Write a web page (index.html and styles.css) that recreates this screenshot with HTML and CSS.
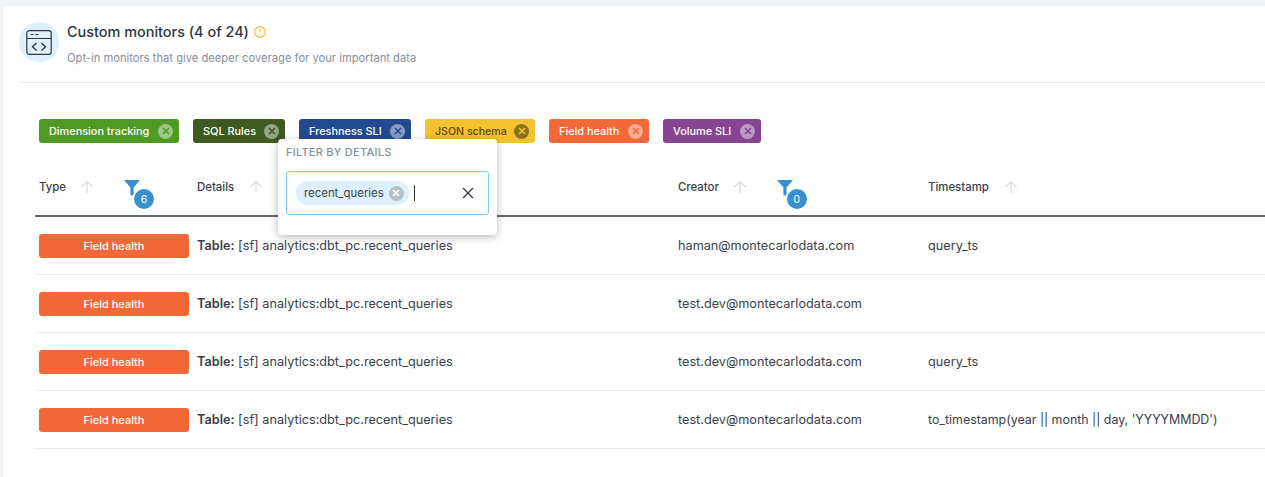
FILE: index.html
```html
<!DOCTYPE html>
<html lang="en">
<head>
<meta charset="utf-8">
<title>Custom monitors</title>
<link rel="stylesheet" href="styles.css">
</head>
<body>
<main class="card">
  <header class="head">
    <span class="head-icon">
      <svg width="26" height="26" viewBox="0 0 26 26" fill="none" stroke="#2f3642" stroke-width="1.2"><rect x="0.8" y="1.6" width="24.4" height="23.8" rx="2.4"/><path d="M1 9.5h24M4.5 5.5h3M9.5 5.5h3"/><path d="M10.5 14l-4 3.7 4 3.7M15.5 14l4 3.7-4 3.7" stroke-width="1.4"/></svg>
    </span>
    <div class="head-text">
      <h1 class="title">Custom monitors (4 of 24)
        <svg class="warn" width="12" height="12" viewBox="0 0 12 12" fill="none" stroke="#f4c22f" stroke-width="1.2"><circle cx="6" cy="6" r="5.3"/><path d="M6 2.8v3.8M6 8.2v1.1"/></svg>
      </h1>
      <p class="sub">Opt-in monitors that give deeper coverage for your important data</p>
    </div>
  </header>

  <div class="chips">
    <span class="chip green">Dimension tracking<i class="x"><svg viewBox="0 0 8 8"><path d="M1 1l6 6M7 1l-6 6"/></svg></i></span>
    <span class="chip moss">SQL Rules<i class="x"><svg viewBox="0 0 8 8"><path d="M1 1l6 6M7 1l-6 6"/></svg></i></span>
    <span class="chip navy">Freshness SLI<i class="x"><svg viewBox="0 0 8 8"><path d="M1 1l6 6M7 1l-6 6"/></svg></i></span>
    <span class="chip yellow">JSON schema<i class="x"><svg viewBox="0 0 8 8"><path d="M1 1l6 6M7 1l-6 6"/></svg></i></span>
    <span class="chip orange">Field health<i class="x"><svg viewBox="0 0 8 8"><path d="M1 1l6 6M7 1l-6 6"/></svg></i></span>
    <span class="chip purple">Volume SLI<i class="x"><svg viewBox="0 0 8 8"><path d="M1 1l6 6M7 1l-6 6"/></svg></i></span>
  </div>

  <div class="table">
    <div class="row header">
      <div class="c-type"><span class="th">Type</span><svg class="sort" width="14" height="14" viewBox="0 0 14 14"><path d="M7 13V1.500M1.500 7L7 1.500 12.500 7"/></svg>
        <span class="filter"><svg width="16" height="16" viewBox="0 0 16 16"><path d="M0 0h16L9.600 7.500V14a1.600 1.600 0 0 1-3.200 0V7.500z"/></svg><b class="count">6</b></span></div>
      <div class="c-details"><span class="th">Details</span><svg class="sort" width="14" height="14" viewBox="0 0 14 14"><path d="M7 13V1.500M1.500 7L7 1.500 12.500 7"/></svg></div>
      <div class="c-creator"><span class="th">Creator</span><svg class="sort" width="14" height="14" viewBox="0 0 14 14"><path d="M7 13V1.500M1.500 7L7 1.500 12.500 7"/></svg>
        <span class="filter"><svg width="16" height="16" viewBox="0 0 16 16"><path d="M0 0h16L9.600 7.500V14a1.600 1.600 0 0 1-3.200 0V7.500z"/></svg><b class="count">0</b></span></div>
      <div class="c-time"><span class="th">Timestamp</span><svg class="sort" width="14" height="14" viewBox="0 0 14 14"><path d="M7 13V1.500M1.500 7L7 1.500 12.500 7"/></svg></div>
    </div>
    <div class="row">
      <div class="c-type"><span class="badge">Field health</span></div>
      <div class="c-details"><b>Table:</b> [sf] analytics:dbt_pc.recent_queries</div>
      <div class="c-creator">haman@montecarlodata.com</div>
      <div class="c-time">query_ts</div>
    </div>
    <div class="row">
      <div class="c-type"><span class="badge">Field health</span></div>
      <div class="c-details"><b>Table:</b> [sf] analytics:dbt_pc.recent_queries</div>
      <div class="c-creator">test.dev@montecarlodata.com</div>
      <div class="c-time"></div>
    </div>
    <div class="row">
      <div class="c-type"><span class="badge">Field health</span></div>
      <div class="c-details"><b>Table:</b> [sf] analytics:dbt_pc.recent_queries</div>
      <div class="c-creator">test.dev@montecarlodata.com</div>
      <div class="c-time">query_ts</div>
    </div>
    <div class="row">
      <div class="c-type"><span class="badge">Field health</span></div>
      <div class="c-details"><b>Table:</b> [sf] analytics:dbt_pc.recent_queries</div>
      <div class="c-creator">test.dev@montecarlodata.com</div>
      <div class="c-time"><span class="expr">to_timestamp(year || month || day, 'YYYYMMDD')</span></div>
    </div>
  </div>

  <div class="popover">
    <div class="pop-label">FILTER BY DETAILS</div>
    <div class="pop-input">
      <span class="tag">recent_queries<i class="x tag-x"><svg viewBox="0 0 8 8"><path d="M1 1l6 6M7 1l-6 6"/></svg></i></span>
      <span class="caret"></span>
      <svg class="clear" width="12" height="12" viewBox="0 0 12 12"><path d="M1 1l10 10M11 1L1 11"/></svg>
    </div>
  </div>
</main>
</body>
</html>
```
FILE: styles.css
```css
* { box-sizing: border-box; }
html, body { margin: 0; height: 100%; }
body {
  background: #f2f6f9;
  font-family: "Inter", "Liberation Sans", sans-serif;
  font-feature-settings: "calt" 0, "liga" 0;
  color: #3a404c;
  overflow: hidden;
  padding: 6px 0 0 3px;
}
.card {
  position: relative;
  background: #fff;
  border-radius: 4px 0 0 0;
  height: 471px;
  padding: 16px 0 0 16px;
  box-shadow: 0 0 2px #dfe4ea;
}
.head {
  display: flex;
  gap: 8px;
  height: 61px;
  border-bottom: 1px solid #e6e9ef;
}
.head-icon {
  width: 40px;
  height: 40px;
  border-radius: 50%;
  background: #dff0fd;
  display: flex;
  align-items: center;
  justify-content: center;
}
.title {
  margin: 0;
  font-size: 14.45px;
  line-height: 20px;
  font-weight: 500;
  color: #2f3642;
  display: flex;
  align-items: center;
  gap: 5px;
}
.warn { display: block; }
.sub {
  margin: 8px 0 0;
  font-size: 11.2px;
  line-height: 16px;
  color: #868e9c;
}
.chips {
  display: flex;
  gap: 14px;
  padding: 36px 0 0 20px;
}
.chip {
  display: inline-flex;
  align-items: center;
  justify-content: space-between;
  height: 24px;
  padding: 0 6px 0 10px;
  border-radius: 3px;
  font-size: 10.9px;
  font-weight: 500;
  color: #fff;
  white-space: nowrap;
}
.x {
  flex: none;
  width: 15px;
  height: 15px;
  border-radius: 50%;
  display: flex;
  align-items: center;
  justify-content: center;
  background: rgba(255,255,255,.45);
}
.x svg { width: 8px; height: 8px; fill: none; stroke: currentColor; stroke-width: 1.6; }
.green { background: #4f9a24; width: 140px; }
.moss { background: #3d5a21; width: 92px; }
.navy { background: #234a90; width: 112px; }
.yellow { background: #f4c22f; color: #5a4a12; width: 110px; font-size: 10.6px; }
.yellow .x { background: rgba(70,60,10,.6); color: #f4c22f; }
.moss .x { color: #3d5a21; }
.green .x { color: #4f9a24; }
.navy .x { color: #234a90; }
.orange { background: #f26836; width: 100px; }
.orange .x { color: #f26836; }
.purple { background: #864493; width: 98px; }
.purple .x { color: #864493; }
.table { margin: 0 0 0 16px; padding-top: 30px; }
.row {
  display: grid;
  grid-template-columns: 158px 481px 250px 1fr;
  align-items: center;
  height: 58px;
  border-bottom: 1px solid #e8ebef;
  font-size: 12.7px;
}
.row > div { padding-left: 4px; }
.row.header {
  height: 44px;
  border-bottom: 2px solid #646a73;
  align-items: start;
  padding-top: 3px;
}
.row.header > div { display: flex; align-items: center; height: 22px; }
.th { font-size: 11.4px; font-weight: 500; color: #3a404c; }
.sort { margin-left: 14px; fill: none; stroke: #d5dde5; stroke-width: 1.2; }
.c-details .sort { margin-left: 15px; }
.c-time .sort { margin-left: 15px; }
.filter {
  position: relative;
  align-self: flex-start;
  margin: 4px 0 0 30px;
  width: 30px;
  height: 30px;
}
.filter svg { display: block; fill: #3a8fd0; }
.count {
  position: absolute;
  left: 10px;
  top: 9px;
  width: 20px;
  height: 20px;
  border-radius: 50%;
  background: #3a8fd0;
  color: #fff;
  font-size: 10.500px;
  font-weight: 400;
  display: flex;
  align-items: center;
  justify-content: center;
}
.badge {
  display: flex;
  align-items: center;
  justify-content: center;
  width: 150px;
  height: 24px;
  border-radius: 3px;
  background: #f26836;
  color: #fff;
  font-size: 11px;
  font-weight: 500;
}
.c-details b { font-weight: 600; }
.expr { font-size: 12.4px; }
.popover {
  position: absolute;
  left: 275px;
  top: 133px;
  width: 219px;
  height: 96px;
  background: #fff;
  border-radius: 4px;
  box-shadow: 0 2px 8px rgba(0,0,0,.28);
  padding: 7px 8px;
}
.pop-label { font-size: 11px; letter-spacing: .25px; line-height: 12px; font-weight: 500; color: #868e9c; }
.pop-input {
  display: flex;
  align-items: center;
  margin-top: 13px;
  height: 44px;
  border: 1px solid #7cc7f4;
  border-radius: 3px;
  padding: 0 14px 0 9px;
}
.tag {
  display: inline-flex;
  align-items: center;
  gap: 5px;
  height: 24px;
  padding: 0 5px 0 8px;
  border-radius: 12px;
  background: #dff0fd;
  font-size: 11.4px;
  color: #3a404c;
}
.tag-x { background: #b6c0ca; color: #fff; }
.caret { width: 1px; height: 16px; background: #2f3642; margin-left: 5px; }
.clear { margin-left: auto; fill: none; stroke: #3a404c; stroke-width: 1.4; }
```
